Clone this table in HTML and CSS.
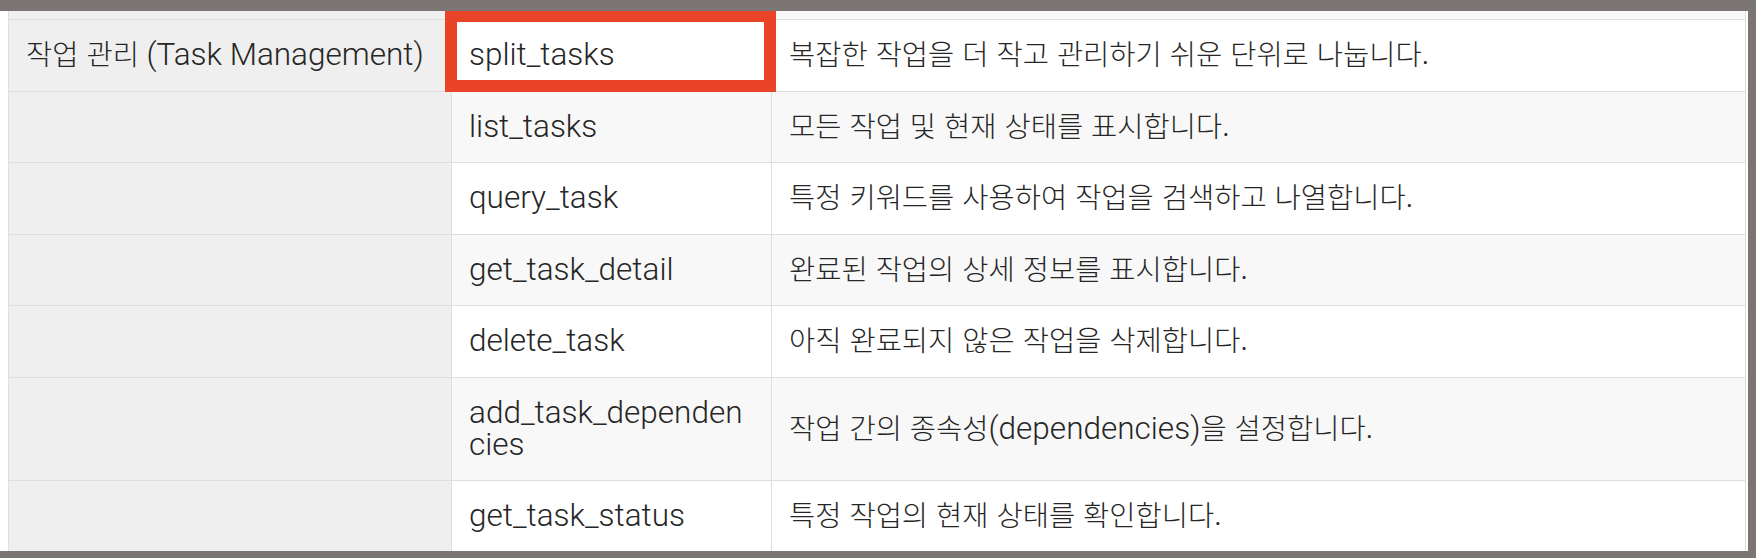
FILE: index.html
```html
<!DOCTYPE html>
<html lang="ko">
<head>
<meta charset="utf-8">
<title>Task Management tools</title>
<link rel="stylesheet" href="styles.css">
</head>
<body>
<div class="window">
  <table class="tools">
    <colgroup>
      <col class="c-cat">
      <col class="c-name">
      <col class="c-desc">
    </colgroup>
    <tr class="tail"><td class="cat"></td><td></td><td></td></tr>
    <tr>
      <td class="cat"><span class="ko">작업 관리</span> (Task Management)</td>
      <td class="name">split_tasks</td>
      <td><span class="ko">복잡한 작업을 더 작고 관리하기 쉬운 단위로 나눕니다.</span></td>
    </tr>
    <tr>
      <td class="cat"></td>
      <td class="name">list_tasks</td>
      <td><span class="ko">모든 작업 및 현재 상태를 표시합니다.</span></td>
    </tr>
    <tr>
      <td class="cat"></td>
      <td class="name">query_task</td>
      <td><span class="ko">특정 키워드를 사용하여 작업을 검색하고 나열합니다.</span></td>
    </tr>
    <tr>
      <td class="cat"></td>
      <td class="name">get_task_detail</td>
      <td><span class="ko">완료된 작업의 상세 정보를 표시합니다.</span></td>
    </tr>
    <tr>
      <td class="cat"></td>
      <td class="name">delete_task</td>
      <td><span class="ko">아직 완료되지 않은 작업을 삭제합니다.</span></td>
    </tr>
    <tr>
      <td class="cat"></td>
      <td class="name">add_task_dependencies</td>
      <td><span class="ko">작업 간의 종속성</span>(dependencies)<span class="ko">을 설정합니다.</span></td>
    </tr>
    <tr>
      <td class="cat"></td>
      <td class="name">get_task_status</td>
      <td><span class="ko">특정 작업의 현재 상태를 확인합니다.</span></td>
    </tr>
  </table>
  <div class="highlight"></div>
</div>
</body>
</html>
```

FILE: styles.css
```css
html, body {
  margin: 0;
  padding: 0;
}

body {
  background: #7b7673;
  width: 1756px;
  height: 558px;
  overflow: hidden;
  font-family: Roboto, "Noto Sans CJK KR", sans-serif;
  color: #262626;
}

.window {
  position: relative;
  margin-top: 11px;
  width: 1748px;
  height: 540px;
  background: #ffffff;
  overflow: hidden;
  padding-left: 8px;
  box-sizing: border-box;
}

.tools {
  border-collapse: collapse;
  table-layout: fixed;
  width: 1737px;
  font-size: 31.5px;
  font-weight: 300;
  line-height: 32px;
}

.c-cat { width: 443px; }
.c-name { width: 320px; }
.c-desc { width: 974px; }

.tools td {
  border: 1px solid #dedede;
  padding: 19.25px 16px 19.25px 17px;
  vertical-align: middle;
  background: #ffffff;
  word-break: break-all;
}

.tools td.name {
  padding-right: 22px;
}

.tools tr:nth-child(odd) td {
  background: #f8f8f8;
}

.tools td.cat,
.tools tr:nth-child(odd) td.cat {
  background: #efefef;
  word-break: normal;
}

.tools tr.tail td {
  height: 8px;
  padding: 0;
  line-height: 0;
  border-top: 0;
}

.ko {
  font-family: "Noto Sans CJK KR", Roboto, sans-serif;
  font-size: 28.5px;
  line-height: 24px;
}

.highlight {
  position: absolute;
  left: 445px;
  top: -1px;
  width: 331px;
  height: 82px;
  border: 12px solid #e94328;
  box-sizing: border-box;
}
```
